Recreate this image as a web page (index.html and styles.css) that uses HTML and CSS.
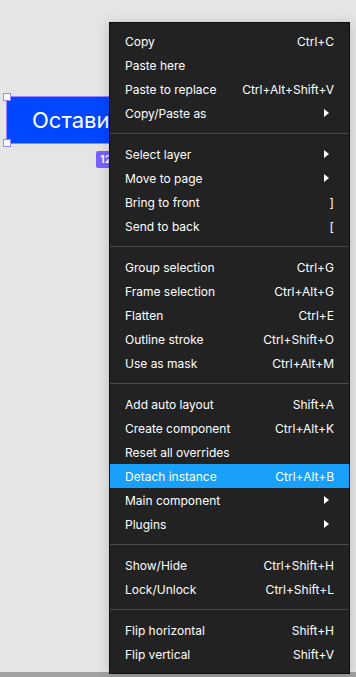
FILE: index.html
```html
<!DOCTYPE html>
<html lang="ru">
<head>
  <meta charset="UTF-8">
  <meta name="viewport" content="width=device-width, initial-scale=1.0">
  <title>Canvas menu</title>
  <link rel="stylesheet" href="styles.css">
</head>
<body>

<div class="canvas">
  <div class="frame">
    <span class="frame-text">Оставить заявку</span>
    <i class="handle tl"></i>
    <i class="handle bl"></i>
  </div>
  <div class="size-badge">120 × 48</div>

  <div class="menu">
    <div class="group">
      <div class="item"><span>Copy</span><span class="key">Ctrl+C</span></div>
      <div class="item"><span>Paste here</span></div>
      <div class="item"><span>Paste to replace</span><span class="key">Ctrl+Alt+Shift+V</span></div>
      <div class="item"><span>Copy/Paste as</span><span class="arrow"></span></div>
    </div>
    <div class="sep"></div>
    <div class="group">
      <div class="item"><span>Select layer</span><span class="arrow"></span></div>
      <div class="item"><span>Move to page</span><span class="arrow"></span></div>
      <div class="item"><span>Bring to front</span><span class="key">]</span></div>
      <div class="item"><span>Send to back</span><span class="key">[</span></div>
    </div>
    <div class="sep"></div>
    <div class="group">
      <div class="item"><span>Group selection</span><span class="key">Ctrl+G</span></div>
      <div class="item"><span>Frame selection</span><span class="key">Ctrl+Alt+G</span></div>
      <div class="item"><span>Flatten</span><span class="key">Ctrl+E</span></div>
      <div class="item"><span>Outline stroke</span><span class="key">Ctrl+Shift+O</span></div>
      <div class="item"><span>Use as mask</span><span class="key">Ctrl+Alt+M</span></div>
    </div>
    <div class="sep"></div>
    <div class="group">
      <div class="item"><span>Add auto layout</span><span class="key">Shift+A</span></div>
      <div class="item"><span>Create component</span><span class="key">Ctrl+Alt+K</span></div>
      <div class="item"><span>Reset all overrides</span></div>
      <div class="item active"><span>Detach instance</span><span class="key">Ctrl+Alt+B</span></div>
      <div class="item"><span>Main component</span><span class="arrow"></span></div>
      <div class="item"><span>Plugins</span><span class="arrow"></span></div>
    </div>
    <div class="sep"></div>
    <div class="group">
      <div class="item"><span>Show/Hide</span><span class="key">Ctrl+Shift+H</span></div>
      <div class="item"><span>Lock/Unlock</span><span class="key">Ctrl+Shift+L</span></div>
    </div>
    <div class="sep"></div>
    <div class="group">
      <div class="item"><span>Flip horizontal</span><span class="key">Shift+H</span></div>
      <div class="item"><span>Flip vertical</span><span class="key">Shift+V</span></div>
    </div>
  </div>
</div>

<div class="bottom-bar"></div>

</body>
</html>
```

FILE: styles.css
```css
html, body {
    margin: 0;
    padding: 0;
}
body {
    width: 356px;
    height: 677px;
    overflow: hidden;
    background: #e5e5e5;
    font-family: Inter, "Noto Sans", sans-serif;
    display: flex;
    flex-direction: column;
}
.canvas {
    position: relative;
    flex: 1;
}
.bottom-bar {
    height: 5px;
    background: #a2a2a2;
}

/* frame on the canvas */
.frame {
    position: absolute;
    left: 6px;
    top: 96px;
    width: 190px;
    height: 48px;
    background: #0047ff;
    border: 1px solid #9a84ff;
    box-sizing: border-box;
    display: flex;
    align-items: center;
    padding-left: 25px;
    white-space: nowrap;
}
.frame-text {
    color: #fff;
    font-size: 22px;
    font-weight: 400;
}
.handle {
    position: absolute;
    width: 6px;
    height: 6px;
    background: #fff;
    border: 1px solid #9a84ff;
}
.handle.tl { left: -4px; top: -4px; }
.handle.bl { left: -4px; bottom: -4px; }

.size-badge {
    position: absolute;
    left: 96px;
    top: 151px;
    height: 17px;
    padding: 0 4px;
    border-radius: 2px;
    background: #7b61ff;
    color: #fff;
    font-size: 11px;
    font-weight: 600;
    line-height: 17px;
    white-space: nowrap;
}

/* context menu */
.menu {
    position: absolute;
    left: 109px;
    top: 22px;
    width: 241px;
    box-sizing: border-box;
    padding: 6px 0 7px;
    background: #222222;
    border: 1px solid #0d0d0d;
    box-shadow: 0 2px 12px rgba(0, 0, 0, 0.18);
    color: #fff;
    font-size: 12px;
}
.item {
    height: 24px;
    padding: 0 15px;
    display: flex;
    align-items: center;
    justify-content: space-between;
    white-space: nowrap;
}
.item.active {
    background: #18a0fb;
}
.arrow {
    width: 0;
    height: 0;
    margin-right: 5px;
    border-top: 4px solid transparent;
    border-bottom: 4px solid transparent;
    border-left: 5px solid #fff;
}
.sep {
    height: 1px;
    margin: 8px 0;
    background: #4a4a4a;
}
```
